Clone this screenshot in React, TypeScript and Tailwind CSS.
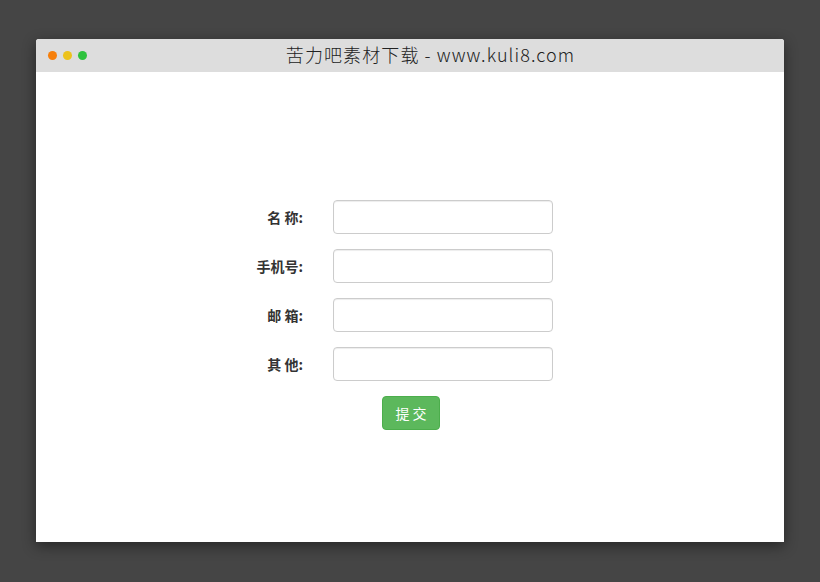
import React from "react";

const fields = ["名 称:", "手机号:", "邮 箱:", "其 他:"];

export default function App() {
  return (
    <div className="w-[820px] h-[582px] bg-[#454545] pt-[39px] px-[36px]" style={{ fontFamily: '"Noto Sans CJK SC", sans-serif' }}>
      <div className="w-[748px] h-[503px] bg-white flex flex-col shadow-[0_4px_14px_rgba(0,0,0,0.45)] rounded-t-[3px] overflow-hidden">
        <div className="h-[33px] bg-[#dddddd] flex items-center relative shrink-0">
          <div className="flex gap-[6px] pl-[12px]">
            <span className="w-[9px] h-[9px] rounded-full bg-[#f67f0b]" />
            <span className="w-[9px] h-[9px] rounded-full bg-[#ecc21c]" />
            <span className="w-[9px] h-[9px] rounded-full bg-[#2ec23d]" />
          </div>
          <div className="absolute inset-0 flex items-center justify-center pb-[3px] pl-[41px] text-[18px] tracking-[1.1px] font-light text-[#222] leading-none">
            苦力吧素材下载 - www.kuli8.com
          </div>
        </div>
        <div className="flex-1 pt-[128px] pl-[177px]">
          <div className="flex flex-col gap-[15px]">
            {fields.map((f) => (
              <div key={f} className="flex items-center gap-[30px]">
                <label className="w-[90px] text-right text-[14px] font-bold text-[#333]">{f}</label>
                <input className="w-[220px] h-[34px] border border-[#cccccc] rounded-[4px] outline-none px-3 shadow-[inset_0_1px_1px_rgba(0,0,0,0.075)]" />
              </div>
            ))}
          </div>
          <button className="mt-[15px] ml-[169px] w-[58px] h-[34px] bg-[#5cb85c] border border-[#4cae4c] rounded-[4px] text-white text-[14px]">
            提 交
          </button>
        </div>
      </div>
    </div>
  );
}
